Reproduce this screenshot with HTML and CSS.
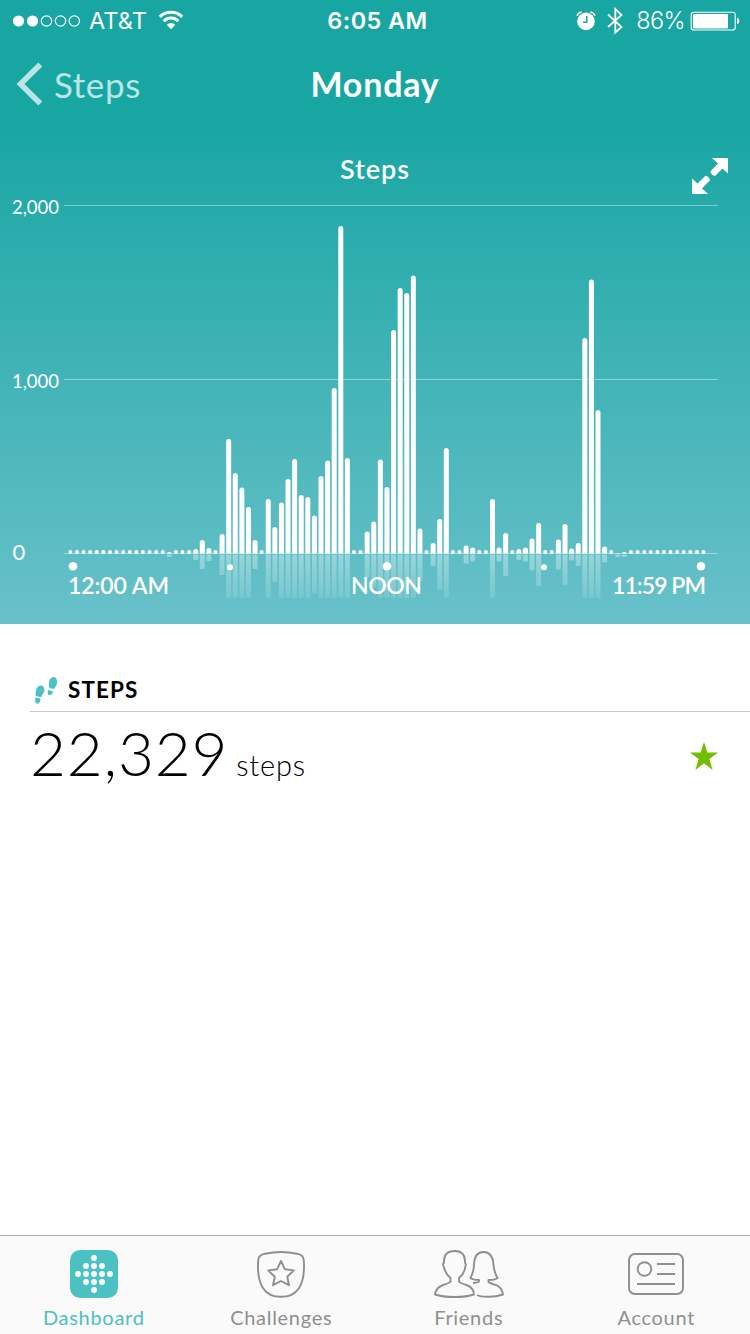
FILE: index.html
```html
<!DOCTYPE html>
<html lang="en">
<head>
    <meta charset="UTF-8">
    <meta name="viewport" content="width=device-width, initial-scale=1.0">
    <title>Steps - Monday</title>
    <link rel="stylesheet" href="styles.css">
</head>
<body>

    <div class="hero">
        <!-- Status bar -->
        <div class="status-bar">
            <div class="status-left">
                <svg width="68" height="14" viewBox="0 0 68 14" fill="none" stroke="#fff" stroke-width="1.2">
                    <circle cx="6.500" cy="7" r="5" fill="#fff"/>
                    <circle cx="20.500" cy="7" r="5" fill="#fff"/>
                    <circle cx="34.500" cy="7" r="5.2"/>
                    <circle cx="48.500" cy="7" r="5.2"/>
                    <circle cx="62.300" cy="7" r="5.2"/>
                </svg>
                <span class="carrier">AT&amp;T</span>
                <svg class="wifi" width="26" height="20" viewBox="0 0 26 20">
                    <path d="M1.8 6.9a16 16 0 0 1 22.4 0" fill="none" stroke="#fff" stroke-width="3"/>
                    <path d="M5.7 11.1a10.4 10.4 0 0 1 14.6 0" fill="none" stroke="#fff" stroke-width="3"/>
                    <path d="M13 19.2l-4.2-4.4a6 6 0 0 1 8.4 0z" fill="#fff"/>
                </svg>
            </div>
            <span class="clock">6:05 AM</span>
            <div class="status-right">
                <svg width="20" height="20" viewBox="0 0 20 20">
                    <circle cx="10" cy="10.4" r="8.8" fill="#fff"/>
                    <path d="M1 4.8Q2 1.700 5.6 1M14.4 1Q18 1.700 19 4.800" fill="none" stroke="#fff" stroke-width="1.6"/>
                    <path d="M10.8 5v6.300H7" fill="none" stroke="#18a6a3" stroke-width="1.5"/>
                </svg>
                <svg class="bluetooth" width="16" height="28" viewBox="0 0 16 28">
                    <path d="M1 7.500l13.5 12.500L8.3 25.5V2L14.5 8 1 20" fill="none" stroke="#fff" stroke-width="1.8"/>
                </svg>
                <span class="percent">86%</span>
                <svg width="50" height="20" viewBox="0 0 50 20">
                    <rect x="1.2" y="1.2" width="44" height="17.8" rx="2.6" fill="none" stroke="#fff" stroke-width="1.1"/>
                    <rect x="3" y="3" width="35" height="14.4" rx=".8" fill="#fff"/>
                    <path d="M47 6.600q2.4.6 2.4 3.5T47 13.6z" fill="#fff"/>
                </svg>
            </div>
        </div>

        <!-- Navigation -->
        <div class="nav-bar">
            <a class="back" href="#">
                <svg width="28" height="44" viewBox="0 0 28 44">
                    <path d="M25.300 2.500L5.500 22 25.300 41.500" fill="none" stroke="#b9e5e4" stroke-width="5.600"/>
                </svg>
                <span>Steps</span>
            </a>
            <h1>Monday</h1>
            <span></span>
        </div>

        <!-- Intraday chart, filled in by script.js -->
        <svg class="chart" width="750" height="500" viewBox="0 124 750 500">
            <defs>
                <linearGradient id="fade" gradientUnits="userSpaceOnUse" x1="0" y1="555" x2="0" y2="598">
                    <stop offset="0" stop-color="#fff" stop-opacity=".36"/>
                    <stop offset="1" stop-color="#fff" stop-opacity=".12"/>
                </linearGradient>
            </defs>
            <text class="chart-title" x="340" y="178.500" textLength="69">Steps</text>
            <g fill="#fff">
                <path d="M712 158H728V173.500L722.500 168.500 715 176Q711.500 175.500 710.300 171.500L718 163.500z"/>
                <path d="M708 194H692V178.500L697.500 183.500 705.500 175.800Q709.200 176.500 710 180.300L702 188.500z"/>
            </g>
            <g class="grid-lines">
                <path d="M64 205.500H718M64 379.500H718M64 553.500H718"/>
            </g>
            <g class="y-labels">
                <text x="12" y="213.500" textLength="47">2,000</text>
                <text x="12" y="387.500" textLength="47">1,000</text>
                <text class="zero" x="12.500" y="559.500">0</text>
            </g>
            <g id="reflections" fill="url(#fade)"></g>
            <g id="bars" fill="#fff"></g>
            <g fill="#fff">
                <circle cx="73" cy="566.300" r="4.300"/>
                <circle cx="230" cy="567.300" r="3"/>
                <circle cx="387" cy="566.300" r="4.300"/>
                <circle cx="544" cy="567.300" r="3"/>
                <circle cx="701" cy="566.300" r="4.300"/>
            </g>
            <g class="x-labels">
                <text x="68" y="594" textLength="101">12:00 AM</text>
                <text x="351" y="594" textLength="71">NOON</text>
                <text x="612" y="594" textLength="94">11:59 PM</text>
            </g>
        </svg>
    </div>

    <!-- Daily total -->
    <div class="summary">
        <div class="summary-head">
            <svg width="24" height="28" viewBox="0 0 24 28" fill="#4cc1c3">
                <path d="M6.800 8.600C9.800 8.800 11.300 12 10 15 9 17.300 7.800 18 7.300 20.300L1.700 19C1.500 14.500 2.300 8.700 6.800 8.600z"/>
                <path d="M1.300 20.600q2.600.2 5.200 1.200-.4 4.800-3.200 5T1.300 20.600z"/>
                <path d="M19.500 0C22.600.2 23.600 3.500 22.900 6.800 22.300 9.500 21 10 20.300 12L15.300 11C15 9 14.700 8 15 5.500 15.400 2.300 17 0 19.500 0z"/>
                <path d="M14 13q2.500 1.100 5 1.200-.8 4.100-3.500 3.900T14 13z"/>
            </svg>
            <h2>STEPS</h2>
        </div>
        <div class="summary-row">
            <div class="reading"><span class="total">22,329</span><span class="unit">steps</span></div>
            <svg width="28" height="28" viewBox="0 0 28 28">
                <path d="M14 0l3.300 10.400H28l-8.600 6.700L22.600 28 14 21.300 5.400 28l3.200-10.900L0 10.400h10.700z" fill="#72bd00"/>
            </svg>
        </div>
    </div>

    <!-- Tab bar -->
    <div class="tab-bar">
        <a class="tab active" href="#">
            <svg width="48" height="48" viewBox="0 0 48 48">
                <rect width="48" height="48" rx="10" fill="#4cc1c3"/>
                <g fill="#fff">
                    <circle cx="24" cy="8" r="2.900"/>
                    <circle cx="16" cy="16" r="2.900"/><circle cx="24" cy="16" r="2.900"/><circle cx="32" cy="16" r="2.900"/>
                    <circle cx="8" cy="24" r="2.900"/><circle cx="16" cy="24" r="2.900"/><circle cx="24" cy="24" r="2.900"/><circle cx="32" cy="24" r="2.900"/><circle cx="40" cy="24" r="2.900"/>
                    <circle cx="16" cy="32" r="2.900"/><circle cx="24" cy="32" r="2.900"/><circle cx="32" cy="32" r="2.900"/>
                    <circle cx="24" cy="40" r="2.900"/>
                </g>
            </svg>
            <span>Dashboard</span>
        </a>
        <a class="tab" href="#">
            <svg width="48" height="48" viewBox="0 0 48 48" fill="none" stroke="#8e908f" stroke-width="1.900" stroke-linejoin="round">
                <path d="M1 14C1 6 3 5 8 3.700Q24 .2 40 3.700C45 5 47 6 47 14C47.500 34 41 46.800 24 46.800S.500 34 1 14z"/>
                <path d="M24 11l3.800 8.200 9 1.200-6.500 6.300 1.700 8.500-8-4.200-8 4.200 1.700-8.500-6.500-6.300 9-1.200z"/>
            </svg>
            <span>Challenges</span>
        </a>
        <a class="tab" href="#">
            <svg width="70" height="48" viewBox="0 0 70 48" fill="none" stroke="#8e908f" stroke-width="1.900" stroke-linejoin="round">
                <path d="M16.500 28v3.500Q15.500 33 9 35 2 37.500 1 44.500 8 47 20.500 47T40 44.500Q40 38 32.500 35 26 33 25 31.500V28Q30.500 23.500 31.200 17 32.500 14.500 31 12.500 31.500 1 20.500 1T10 12.500Q8 14.500 10 17 11 23.500 16.500 28z"/>
                <path d="M39 33Q45 32.500 45 31.500V30Q39.500 30 36.500 28.200 40 21 40 14.500 40.500 2 49.500 2T59.500 14.500Q60 22 63.500 28.200 60.500 30 54.500 30V32Q56 33.500 61.500 34.800 68 37 69 44.500 62 47 54 46.800 46 46.800 43 45"/>
            </svg>
            <span>Friends</span>
        </a>
        <a class="tab" href="#">
            <svg width="56" height="48" viewBox="0 0 56 48" fill="none" stroke="#8e908f" stroke-width="1.900">
                <rect x="1" y="4" width="54" height="40" rx="6"/>
                <circle cx="16.500" cy="19" r="6.800"/>
                <path d="M29 14h18M29 24h18M9 34h38"/>
            </svg>
            <span>Account</span>
        </a>
    </div>

    <script src="script.js"></script>
</body>
</html>
```
FILE: styles.css
```css
body {
    margin: 0;
    width: 750px;
    height: 1334px;
    display: flex;
    flex-direction: column;
    background-color: #fff;
    font-family: Lato, "Liberation Sans", sans-serif;
    overflow: hidden;
}

svg {
    display: block;
    flex-shrink: 0;
}

a {
    text-decoration: none;
}

/* Top area */
.hero {
    height: 624px;
    background: linear-gradient(#18a6a3 0, #18a6a3 120px, #69c1ca 624px);
    color: #fff;
}

.status-bar {
    display: grid;
    grid-template-columns: 1fr auto 1fr;
    align-items: center;
    height: 41px;
    padding: 0 10px 0 12px;
    font-family: Inter, "Liberation Sans", sans-serif;
    font-size: 23.5px;
}

.status-left,
.status-right {
    display: flex;
    align-items: center;
}

.status-right {
    justify-content: flex-end;
}

.carrier {
    margin-left: 9px;
    letter-spacing: 0.1px;
}

.wifi {
    margin: 0 0 1px 11px;
}

.clock {
    font-weight: 600;
    letter-spacing: 0.4px;
    padding-left: 3px;
}

.bluetooth {
    margin-left: 11px;
}

.percent {
    margin: 0 5px 0 13px;
    font-weight: 300;
    letter-spacing: -0.6px;
}

.nav-bar {
    display: grid;
    grid-template-columns: 1fr auto 1fr;
    align-items: center;
    height: 83px;
    padding: 0 15px;
}

.back {
    display: flex;
    align-items: center;
    gap: 11px;
    color: #b9e5e4;
    font-size: 35px;
    letter-spacing: 0.6px;
}

.back svg {
    margin-top: 3px;
}

.back span,
.nav-bar h1 {
    padding-top: 2px;
}

.nav-bar h1 {
    margin: 0;
    font-size: 34px;
    font-weight: 700;
    letter-spacing: 0.8px;
}

/* Chart */
.chart text {
    fill: #fff;
}

.chart-title {
    font-size: 27px;
    font-weight: 600;
}

.grid-lines {
    stroke: #fff;
    stroke-opacity: 0.4;
}

.y-labels {
    font-size: 18.5px;
}

.y-labels .zero {
    font-size: 22px;
}

.x-labels {
    font-size: 23px;
    font-weight: 600;
}

/* Summary */
.summary {
    flex: 1;
    padding: 50px 0 0 30px;
}

.summary-head {
    display: flex;
    align-items: center;
    gap: 10px;
    height: 37px;
    padding-left: 4px;
    border-bottom: 1px solid #c8c8c8;
}

.summary-head svg {
    margin-bottom: 4px;
}

.summary-head h2 {
    margin: 0 0 6px;
    font-size: 22.5px;
    font-weight: 700;
    letter-spacing: 1.1px;
}

.summary-row {
    display: flex;
    justify-content: space-between;
    align-items: center;
    height: 88px;
    padding-right: 32px;
}

.reading {
    padding-bottom: 8px;
}

.total {
    font-size: 62px;
    font-weight: 300;
    letter-spacing: 0.8px;
}

.unit {
    margin-left: 8px;
    font-size: 29px;
    font-weight: 300;
    letter-spacing: 0.8px;
}

/* Tab bar */
.tab-bar {
    display: flex;
    height: 98px;
    border-top: 1px solid #acacac;
    background-color: #fafafa;
}

.tab {
    flex: 1;
    display: flex;
    flex-direction: column;
    align-items: center;
    gap: 7px;
    padding-top: 14px;
    color: #8e908f;
    font-size: 20px;
    line-height: 24px;
    letter-spacing: 0.7px;
}

.tab.active {
    color: #4cc1c3;
}
```
FILE: script.js
```js
// top of each bar in chart coordinates, one per 15 minutes; 0 = no activity
const tops = [
    0, 0, 0, 0, 0, 0, 0, 0, 0, 0, 0, 0, 0, 0, 0, 552,
    0, 0, 0, 549, 540, 548, 0, 534, 439, 473, 487.5, 507, 540, 0,
    499, 527, 502.5, 479, 459, 495, 497, 515.5, 476, 460.5, 388, 226, 458, 0, 0,
    531.5, 521.5, 459.5, 487, 330, 288, 293, 275.5, 528.5, 0,
    543, 519, 448, 0, 0, 545.5, 547.5, 0, 0, 499, 547.5, 533, 0,
    549, 547.5, 538.5, 523, 0, 0, 539.5, 524, 548.5, 543, 338, 279.5, 410, 546.5,
    0, 553, 552, 0, 0, 0, 0, 0, 0, 0, 0, 0, 0, 0, 0
];
const base = 553.5;
const step = 6.595;

let bars = '';
let reflections = '';

tops.forEach((top, i) => {
    const x = 70.4 + i * step;
    if (top === 0) {
        bars += `<circle cx="${x}" cy="552" r="2"/>`;
        return;
    }
    const h = base - top;
    const r = Math.min(2.5, h);
    bars += `<path d="M${x - 2.5} ${base}V${top + r}a2.5 ${r} 0 0 1 5 0V${base}z"/>`;
    const depth = Math.min(Math.max(h + 1, 2.5), 43.5);
    reflections += `<rect x="${x - 2.5}" y="554.5" width="5" height="${depth}" rx="1"/>`;
});

document.getElementById('bars').innerHTML = bars;
document.getElementById('reflections').innerHTML = reflections;
```
